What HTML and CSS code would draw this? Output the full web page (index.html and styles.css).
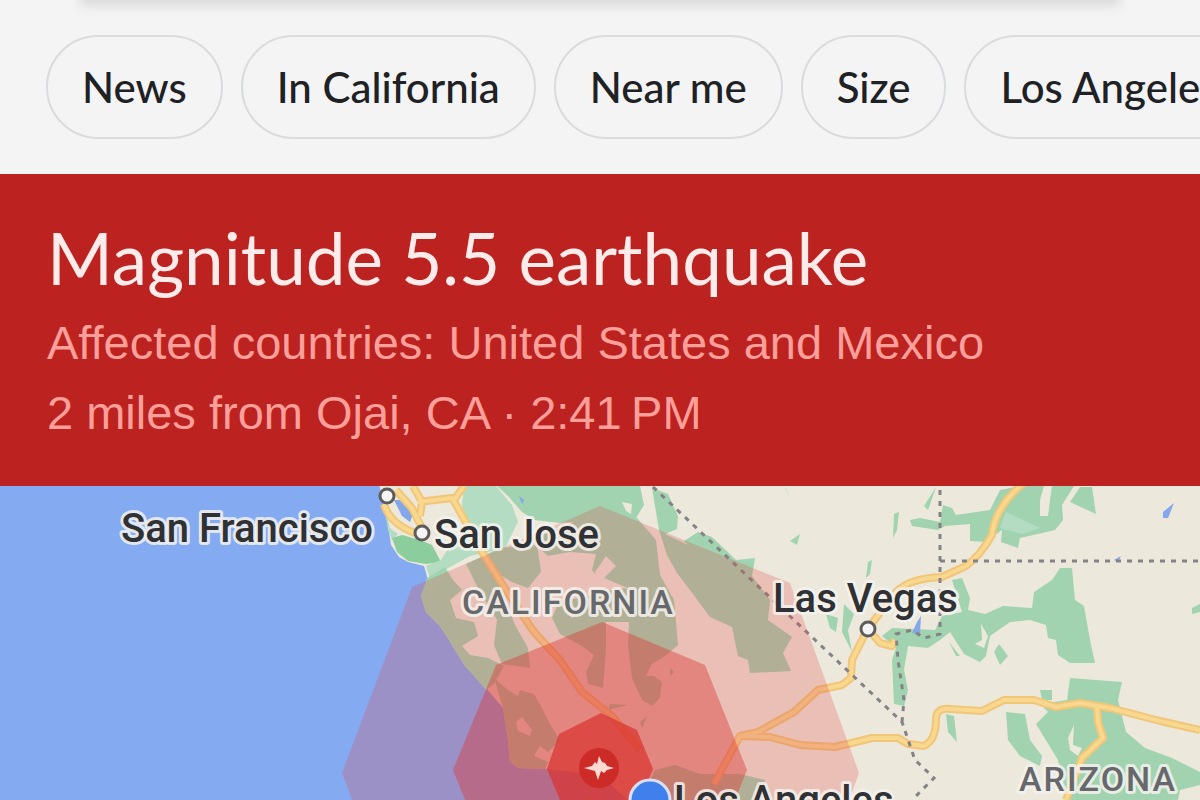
FILE: index.html
```
<!DOCTYPE html>
<html lang="en">

<head>
    <meta charset="UTF-8">
    <meta name="viewport" content="width=device-width, initial-scale=1.0">
    <title>Magnitude 5.5 earthquake</title>
    <link rel="stylesheet" href="styles.css">
</head>

<body>
    <div class="search-edge"></div>
    <nav class="chips">
        <button type="button" class="chip">News</button>
        <button type="button" class="chip">In California</button>
        <button type="button" class="chip">Near me</button>
        <button type="button" class="chip">Size</button>
        <button type="button" class="chip">Los Angeles</button>
    </nav>

    <header class="alert">
        <h1 class="alert-title">Magnitude 5.5 earthquake</h1>
        <p class="alert-text">Affected countries: United States and Mexico</p>
        <p class="alert-text">2 miles from Ojai, CA · 2:41&#8239;PM</p>
    </header>

    <main class="map">
        <svg class="map-svg" viewBox="0 486 1200 314" preserveAspectRatio="xMidYMin slice" role="img" aria-label="Shake map">
            <!-- land -->
            <path class="land" d="M378 480L383 500L388 525L391 545L399 557L408 562L424 566L428 580L421 596L426 612L440 626L452 645L465 666L486 688L503 708L508 740L510 762L518 768L545 769L600 775L628 800H1210V480Z" />

            <!-- parks and forest -->
            <path class="green-light" d="M384 505L390 528L398 534L392 540L388 530Z" />
            <path class="green-dark" d="M392 538L402 535L420 540L432 545L441 562L426 564L408 561L397 552Z" />
            <path class="green-light" d="M464 486H496L512 505L518 522L505 548L470 556L430 578L426 566L441 560L450 545L470 535L462 505Z" />
            <path class="green" d="M497 486H640L644 505L636 518L600 520L560 523L535 520L522 512L508 496Z" />
            <path class="land" d="M622 502L632 504L631 514L626 511Z" />
            <path class="green" d="M427 578L445 567L453 580L462 590L450 600L456 618L474 622L478 636L462 646L470 655L488 658L504 666L494 684L486 690L465 666L452 645L440 626L426 612L421 596Z" />
            <path class="green" d="M466 564L500 548L537 545L541 572L528 588L512 582L500 575L505 600L515 625L528 648L530 668L502 664L494 645L497 620L488 605L478 588Z" />
            <path class="green" d="M530 540L570 524L600 506L637 518L656 540L660 575L674 600L678 645L665 656L652 664L646 676L654 676L662 682L660 698L652 706L642 700L632 678L628 645L629 622L606 622L606 650L603 688L588 684L586 672L594 655L580 645L560 634L552 618L560 600L585 598L605 586L592 570L596 554L570 552L548 556Z" />
            <path class="land" d="M606 556L616 566L604 578L628 588L600 592L595 572ZM560 604L580 612L572 618Z" />
            <path class="green" d="M652 488L668 494L678 516L677 529L665 534L688 545L684 541L698 532L712 537L736 560L755 558L752 576L770 600L768 620L792 637L783 653L791 671L750 673L748 660L738 656L732 627L710 617L690 590L677 573L667 555L659 530Z" />
            <path class="green" d="M494 678L508 690L518 696L520 690L534 694L542 708L550 724L560 740L548 752L540 746L534 756L548 762L545 769L518 768L510 762L508 740L503 708Z" />
            <path class="land" d="M516 722L522 717L532 730L530 736L518 731Z" />
            <path class="green" d="M655 770L675 765L700 774L740 774L765 780L762 800H640ZM610 704L628 705L608 710ZM640 722L647 716L642 728ZM670 668L674 672L670 676Z" />
            <path class="green" d="M785 487L790 497L786 490ZM790 541L800 534L797 545ZM894 514L899 512L897 530L893 538ZM868 562L872 560L870 574L866 578ZM826 614L838 618L836 632L830 628ZM844 604L854 614L848 630L852 652L842 632Z" />
            <path class="green" d="M936 487L928 510L924 506ZM910 520L920 518L940 522L943 505L952 508L956 515L990 510L1000 490L1020 486H1074L1062 505L1063 520L1055 530L1020 538L1018 548L1001 542L1002 530L985 542L970 541V524L945 526L938 530L912 526Z" />
            <path class="green-light" d="M1006 512L1040 528L1022 534L1000 528Z" />
            <path class="land" d="M1044 486H1052L1050 500L1048 516L1040 516L1040 500Z" />
            <path class="green" d="M1080 487H1092L1096 514L1070 502Z" />
            <path class="green" d="M952 580L962 578L970 598L968 610L985 614L1003 606L1032 608L1034 592L1052 580L1060 568L1072 568L1075 600L1084 606L1090 640L1095 663L1070 663L1058 655L1056 640L1048 638L1046 625L1030 620L1010 622L990 636L986 656L980 662L964 654L950 632L940 640L928 648L908 646L904 670L908 690L904 706L894 704L892 660L896 648L882 636L892 628L935 630L942 616L962 612Z" />
            <path class="land" d="M981 624L988 636L984 648L975 644L982 640Z" />
            <path class="green" d="M949 642L960 656L956 656ZM999 644L1008 656L1000 665L994 652ZM946 714L954 716L957 742L948 732ZM1192 608L1200 604V612L1192 614ZM1040 690H1052V700H1042Z" />
            <path class="green" d="M1070 678L1122 682L1118 700L1126 732L1145 748L1172 758L1200 772V800H1066L1058 760L1036 724L1048 712L1040 704L1067 700Z" />
            <path class="green" d="M1006 712L1025 714L1030 740L1042 756L1040 766L1020 756L1008 740Z" />
            <path class="land" d="M1068 738L1074 725L1073 745L1082 748L1078 756L1070 750ZM1180 790L1200 785V800H1178Z" />

            <!-- lakes -->
            <path class="water" d="M394 500L400 500L413 514L410 522L402 516ZM519 496L524 500L522 504ZM917 622L921 616L920 634L912 633ZM1163 512L1174 503L1168 518L1163 518ZM1114 560L1121 556L1118 562Z" />

            <!-- roads, drawn twice for the darker edge -->
            <g class="road-edge">
                <path d="M384 504Q390 524 415 533M396 490L412 508L422 528M413 486L422 502L420 516M418 502L452 498L458 508L482 552L506 590L534 632L560 660L582 692L612 716L640 750M454 500L464 486" />
                <path d="M1025 482Q995 506 992 535Q980 556 966 566L942 577Q910 578 896 592L876 618L867 630L852 660L851 678L842 685L818 690L794 712L758 732L740 736L714 784" />
                <path d="M740 736L770 737L800 745L835 747L872 738L898 738L908 744L924 746Q936 740 936 720Q936 707 950 709L982 711L1004 700L1034 700L1056 707L1080 703L1110 708L1160 721L1200 730" />
                <path d="M869 630L880 643L892 646L895 640M1097 706L1098 722L1103 738L1082 758L1066 800" />
            </g>
            <g class="road">
                <path d="M384 504Q390 524 415 533M396 490L412 508L422 528M413 486L422 502L420 516M418 502L452 498L458 508L482 552L506 590L534 632L560 660L582 692L612 716L640 750M454 500L464 486" />
                <path d="M1025 482Q995 506 992 535Q980 556 966 566L942 577Q910 578 896 592L876 618L867 630L852 660L851 678L842 685L818 690L794 712L758 732L740 736L714 784" />
                <path d="M740 736L770 737L800 745L835 747L872 738L898 738L908 744L924 746Q936 740 936 720Q936 707 950 709L982 711L1004 700L1034 700L1056 707L1080 703L1110 708L1160 721L1200 730" />
                <path d="M869 630L880 643L892 646L895 640M1097 706L1098 722L1103 738L1082 758L1066 800" />
            </g>

            <!-- state borders -->
            <path class="border" d="M653 487L902 722L915 760L934 778L912 800M902 722L904 700L898 660L896 634L912 630L924 638L940 634V486M940 561H1200" />

            <!-- shake intensity -->
            <path class="shake-low" d="M600 506L790 583L859 773L790 960H412L342 773L412 587Z" />
            <path class="shake-mid" d="M602 622L705 665L747 770L705 874L600 917L495 874L453 770L496 665Z" />
            <path class="shake-high" d="M601 713L637 730L653 769L637 807L600 823L563 807L547 769L559 734Z" />
            <circle class="epicenter" cx="599" cy="768" r="20" />
            <path class="epicenter-wave" d="M584 768L592 766L595 762L597 764L599 756L602 762L605 763L607 766L614 768L607 770L604 773L601 771L598 780L595 771L591 770Z" />

            <!-- cities -->
            <circle class="city" cx="387" cy="496" r="7" />
            <circle class="city" cx="422" cy="533" r="7" />
            <circle class="city" cx="868" cy="629" r="7" />
            <circle class="you" cx="650" cy="800" r="20" />
            <text class="label" x="121" y="542">San Francisco</text>
            <text class="label" x="434" y="548">San Jose</text>
            <text class="label" x="773" y="612">Las Vegas</text>
            <text class="label" x="674" y="814">Los Angeles</text>
            <text class="label state" x="462" y="614">CALIFORNIA</text>
            <text class="label state" x="1019" y="791">ARIZONA</text>
        </svg>
    </main>
</body>

</html>
```
FILE: styles.css
```
body {
    margin: 0;
    height: 100vh;
    display: flex;
    flex-direction: column;
    overflow: hidden;
    background-color: #f4f4f4;
    font-family: "Liberation Sans", Arial, sans-serif;
}

.search-edge {
    flex: none;
    height: 2px;
    margin: 0 88px;
    background-color: #dfdfdf;
    box-shadow: 0 -4px 12px 8px #dadada;
}

.chips {
    flex: none;
    display: flex;
    gap: 18px;
    padding: 33px 0 35px 46px;
    overflow: hidden;
}

.chip {
    flex: none;
    height: 104px;
    padding: 0 34px;
    border: 2px solid #dadbdd;
    border-radius: 52px;
    background-color: transparent;
    color: #202124;
    font-family: Lato, sans-serif;
    font-size: 42px;
    font-weight: 500;
    cursor: pointer;
}

.alert {
    flex: none;
    padding: 44px 47px 38px;
    background-color: #bb2220;
}

.alert-title {
    margin: 0 0 10px;
    color: #ffebe9;
    font-family: Lato, sans-serif;
    font-size: 71px;
    font-weight: 400;
    line-height: 80px;
}

.alert-text {
    margin: 0;
    color: #ff9f9a;
    font-size: 47px;
    line-height: 70px;
}

.map {
    flex: 1;
    min-height: 0;
    background-color: #84abf2;
}

.map-svg {
    display: block;
    width: 100%;
    height: 100%;
}

.land {
    fill: #ece8dc;
}

.green {
    fill: #a1d3b0;
}

.green-light {
    fill: #b3dcc2;
}

.green-dark {
    fill: #8bce9c;
}

.water {
    fill: #84a6ea;
}

.road-edge,
.road {
    fill: none;
    stroke: #f1c678;
    stroke-width: 8px;
    stroke-linejoin: round;
}

.road {
    stroke: #f8d78f;
    stroke-width: 4px;
}

.border {
    fill: none;
    stroke: #858286;
    stroke-width: 3px;
    stroke-dasharray: 5 6;
}

.shake-low {
    fill: rgba(225, 75, 75, 0.26);
}

.shake-mid {
    fill: rgba(222, 55, 55, 0.42);
}

.shake-high {
    fill: rgba(217, 50, 44, 0.7);
}

.epicenter {
    fill: #cd2b27;
}

.epicenter-wave {
    fill: #ffd9d3;
}

.city {
    fill: #f4f4f4;
    stroke: #5c5c5c;
    stroke-width: 3px;
}

.you {
    fill: #4080ec;
    stroke: #d9e0f5;
    stroke-width: 3px;
}

.label {
    fill: #303134;
    stroke: rgba(244, 242, 238, 0.85);
    stroke-width: 6px;
    stroke-linejoin: round;
    paint-order: stroke;
    font-family: Roboto, sans-serif;
    font-size: 40px;
    font-weight: 500;
}

.state {
    fill: #66686b;
    font-size: 34px;
    letter-spacing: 2px;
}
```
